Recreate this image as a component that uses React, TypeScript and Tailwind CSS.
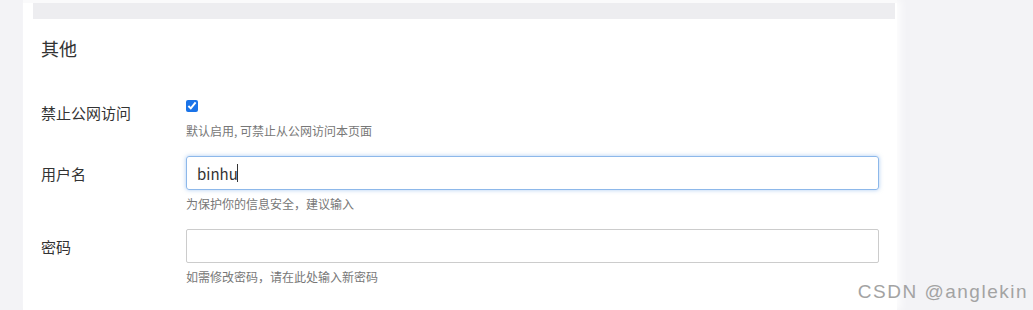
const FONT = "font-['Microsoft_YaHei','Noto_Sans_CJK_SC',sans-serif]";

/* ---------- Form row ---------- */
function Row({
  label,
  help,
  children,
  top,
  helpGap,
}: {
  label: string;
  help: string;
  children: React.ReactNode;
  top: string;
  helpGap: string;
}) {
  return (
    <div className="flex">
      <div className={`w-[145px] shrink-0 text-[15px] leading-[21px] text-[#333] ${top}`}>{label}</div>
      <div className="w-[693px]">
        {children}
        <p className={`${helpGap} text-[12px] leading-[16px] text-[#777]`}>{help}</p>
      </div>
    </div>
  );
}

export default function App() {
  return (
    <div className={`relative h-[310px] w-[1033px] overflow-hidden bg-[#f3f3f6] ${FONT}`}>
      <div className="ml-[23px] h-full w-[874px] bg-white shadow-[4px_0_8px_rgba(255,255,255,0.8)]">
        {/* bottom strip of the card above */}
        <div className="h-[3px] bg-[#fafafb]" />
        <div className="ml-[10px] mr-[2px] h-[16px] bg-[#ededf0]" />

        <div className="pl-[18px]">
          <h2 className="mt-[18px] text-[18px] leading-[22px] text-[#333]">其他</h2>

          <div className="mt-[41px] flex flex-col gap-[17px]">
            <Row
              label="禁止公网访问"
              help="默认启用, 可禁止从公网访问本页面"
              top="pt-[2px]"
              helpGap="mt-[11px]"
            >
              <input
                type="checkbox"
                defaultChecked
                className="m-0 block h-[12px] w-[12px] accent-[#1a73e8]"
              />
            </Row>

            <Row
              label="用户名"
              help="为保护你的信息安全，建议输入"
              top="pt-[7px]"
              helpGap="mt-[6px]"
            >
              <div className="relative">
                <input
                  type="text"
                  defaultValue="binhu"
                  className="block h-[34px] w-full rounded-[3px] border border-[#8db8ea] px-[10px] text-[15px] text-[#333] shadow-[0_0_4px_rgba(102,160,230,0.55)] outline-none"
                />
                {/* caret */}
                <span className="absolute left-[51px] top-[8px] h-[18px] w-px bg-[#333]" />
              </div>
            </Row>

            <Row
              label="密码"
              help="如需修改密码，请在此处输入新密码"
              top="pt-[7px]"
              helpGap="mt-[6px]"
            >
              <input
                type="password"
                className="block h-[34px] w-full rounded-[2px] border border-[#ccc] px-[10px] outline-none"
              />
            </Row>
          </div>
        </div>
      </div>

      {/* watermark */}
      <div className="absolute right-[5px] bottom-[7px] font-['Liberation_Sans',sans-serif] text-[19px] leading-[22px] tracking-[1.5px] text-[#a3a3a3]">
        CSDN @anglekin
      </div>
    </div>
  );
}
